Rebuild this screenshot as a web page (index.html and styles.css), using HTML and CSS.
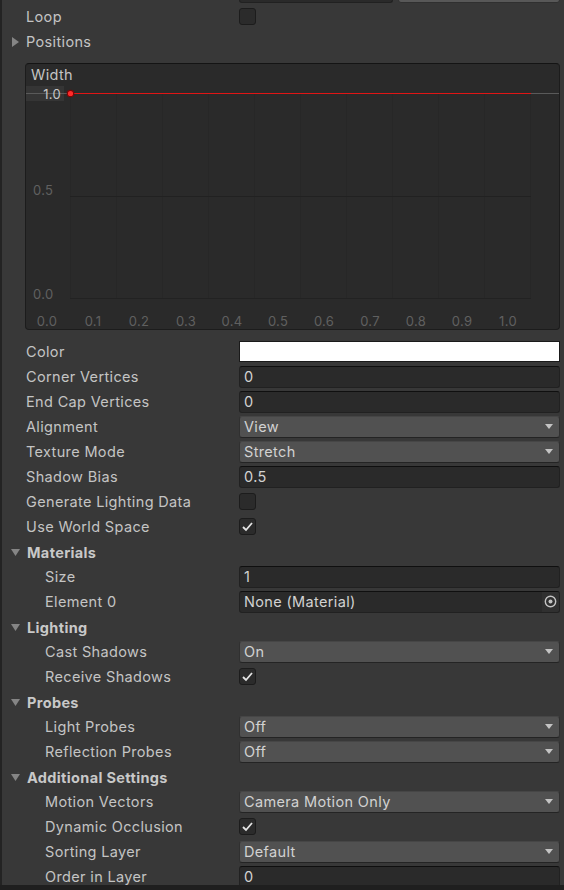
FILE: index.html
```html
<!DOCTYPE html>
<html lang="en">

<head>
    <meta charset="UTF-8">
    <meta name="viewport" content="width=device-width, initial-scale=1.0">
    <title>Line Renderer</title>
    <link rel="stylesheet" href="styles.css">
</head>

<body>
    <div class="inspector">
        <div class="row">
            <span class="label"></span>
            <span class="field text short"></span>
            <span class="field button"></span>
        </div>
        <div class="row">
            <span class="label">Loop</span>
            <span class="checkbox"></span>
        </div>
        <div class="row">
            <span class="foldout">
                <svg width="9" height="12" viewBox="0 0 9 12"><polygon points="1,1 8,6 1,11" /></svg>
            </span>
            <span class="foldout-label plain">Positions</span>
        </div>

        <div class="curve">
            <div class="curve-title">Width</div>
            <svg class="curve-plot" width="535" height="244" viewBox="0 0 535 244">
                <rect x="0" y="0" width="38" height="15" fill="#353535" />
                <g stroke="#272727" stroke-width="1">
                    <line x1="44.5" y1="7" x2="44.5" y2="212" />
                    <line x1="90.5" y1="7" x2="90.5" y2="212" />
                    <line x1="136.5" y1="7" x2="136.5" y2="212" />
                    <line x1="182.5" y1="7" x2="182.5" y2="212" />
                    <line x1="228.5" y1="7" x2="228.5" y2="212" />
                    <line x1="274.5" y1="7" x2="274.5" y2="212" />
                    <line x1="320.5" y1="7" x2="320.5" y2="212" />
                    <line x1="366.5" y1="7" x2="366.5" y2="212" />
                    <line x1="412.5" y1="7" x2="412.5" y2="212" />
                    <line x1="458.5" y1="7" x2="458.5" y2="212" />
                    <line x1="504.5" y1="7" x2="504.5" y2="212" />
                    <line x1="44" y1="110.5" x2="505" y2="110.5" stroke="#212121" />
                    <line x1="44" y1="212.5" x2="505" y2="212.5" stroke="#222222" />
                </g>
                <line x1="0" y1="7.5" x2="535" y2="7.5" stroke="#5a5a5a" />
                <line x1="44" y1="7.5" x2="505" y2="7.5" stroke="#e01515" stroke-width="1.2" />
                <g class="axis" font-size="13">
                    <text x="35" y="8" text-anchor="end" class="axis-hot">1.0</text>
                    <text x="7" y="104">0.5</text>
                    <text x="7" y="208">0.0</text>
                    <text x="21" y="235" text-anchor="middle">0.0</text>
                    <text x="67" y="235" text-anchor="middle">0.1</text>
                    <text x="113" y="235" text-anchor="middle">0.2</text>
                    <text x="160" y="235" text-anchor="middle">0.3</text>
                    <text x="206" y="235" text-anchor="middle">0.4</text>
                    <text x="252" y="235" text-anchor="middle">0.5</text>
                    <text x="298" y="235" text-anchor="middle">0.6</text>
                    <text x="344" y="235" text-anchor="middle">0.7</text>
                    <text x="390" y="235" text-anchor="middle">0.8</text>
                    <text x="436" y="235" text-anchor="middle">0.9</text>
                    <text x="482" y="235" text-anchor="middle">1.0</text>
                </g>
                <circle cx="44.5" cy="7.5" r="3.2" fill="#ff2a2a" stroke="#7a0505" stroke-width="1.2" />
            </svg>
        </div>

        <div class="row">
            <span class="label">Color</span>
            <span class="field color"></span>
        </div>
        <div class="row">
            <span class="label">Corner Vertices</span>
            <span class="field text">0</span>
        </div>
        <div class="row">
            <span class="label">End Cap Vertices</span>
            <span class="field text">0</span>
        </div>
        <div class="row">
            <span class="label">Alignment</span>
            <span class="field popup">View<i class="arrow"></i></span>
        </div>
        <div class="row">
            <span class="label">Texture Mode</span>
            <span class="field popup">Stretch<i class="arrow"></i></span>
        </div>
        <div class="row">
            <span class="label">Shadow Bias</span>
            <span class="field text">0.5</span>
        </div>
        <div class="row">
            <span class="label">Generate Lighting Data</span>
            <span class="checkbox"></span>
        </div>
        <div class="row">
            <span class="label">Use World Space</span>
            <span class="checkbox">
                <svg width="15" height="15" viewBox="0 0 15 15"><polyline points="3,8 6,11 12,4" /></svg>
            </span>
        </div>

        <div class="row header">
            <span class="foldout">
                <svg width="9" height="9" viewBox="0 0 9 9"><polygon points="0,1 9,1 4.5,8" /></svg>
            </span>
            <span class="foldout-label">Materials</span>
        </div>
        <div class="row">
            <span class="label sub">Size</span>
            <span class="field text">1</span>
        </div>
        <div class="row">
            <span class="label sub">Element 0</span>
            <span class="field text object">
                <span class="object-name">None (Material)</span>
                <span class="picker">
                    <svg width="13" height="13" viewBox="0 0 13 13">
                        <circle cx="6.5" cy="6.5" r="5.2" fill="none" stroke="#c4c4c4" stroke-width="1.4" />
                        <circle cx="6.5" cy="6.5" r="2" fill="#c4c4c4" />
                    </svg>
                </span>
            </span>
        </div>

        <div class="row header">
            <span class="foldout">
                <svg width="9" height="9" viewBox="0 0 9 9"><polygon points="0,1 9,1 4.5,8" /></svg>
            </span>
            <span class="foldout-label">Lighting</span>
        </div>
        <div class="row">
            <span class="label sub">Cast Shadows</span>
            <span class="field popup">On<i class="arrow"></i></span>
        </div>
        <div class="row">
            <span class="label sub">Receive Shadows</span>
            <span class="checkbox">
                <svg width="15" height="15" viewBox="0 0 15 15"><polyline points="3,8 6,11 12,4" /></svg>
            </span>
        </div>

        <div class="row header">
            <span class="foldout">
                <svg width="9" height="9" viewBox="0 0 9 9"><polygon points="0,1 9,1 4.5,8" /></svg>
            </span>
            <span class="foldout-label">Probes</span>
        </div>
        <div class="row">
            <span class="label sub">Light Probes</span>
            <span class="field popup">Off<i class="arrow"></i></span>
        </div>
        <div class="row">
            <span class="label sub">Reflection Probes</span>
            <span class="field popup">Off<i class="arrow"></i></span>
        </div>

        <div class="row header">
            <span class="foldout">
                <svg width="9" height="9" viewBox="0 0 9 9"><polygon points="0,1 9,1 4.5,8" /></svg>
            </span>
            <span class="foldout-label">Additional Settings</span>
        </div>
        <div class="row">
            <span class="label sub">Motion Vectors</span>
            <span class="field popup">Camera Motion Only<i class="arrow"></i></span>
        </div>
        <div class="row">
            <span class="label sub">Dynamic Occlusion</span>
            <span class="checkbox">
                <svg width="15" height="15" viewBox="0 0 15 15"><polyline points="3,8 6,11 12,4" /></svg>
            </span>
        </div>
        <div class="row">
            <span class="label sub">Sorting Layer</span>
            <span class="field popup">Default<i class="arrow"></i></span>
        </div>
        <div class="row">
            <span class="label sub">Order in Layer</span>
            <span class="field text">0</span>
        </div>
    </div>
</body>

</html>
```

FILE: styles.css
```css
html,
body {
    margin: 0;
    background-color: #1f1f1f;
}

body {
    font-family: Inter, "Noto Sans", sans-serif;
    font-size: 14.5px;
    letter-spacing: 0.35px;
    color: #c4c4c4;
}

.inspector {
    width: 562px;
    height: 885px;
    overflow: hidden;
    border-left: 2px solid #232323;
    background-color: #383838;
}

.inspector > .row:first-child {
    margin-top: -21px;
}

.row {
    display: flex;
    align-items: center;
    height: 25px;
}

.row.header {
    padding-top: 1px;
    height: 24px;
}

.label {
    box-sizing: border-box;
    flex: 0 0 237px;
    padding-left: 24px;
    white-space: nowrap;
}

.label.sub {
    padding-left: 43px;
}

.foldout {
    display: flex;
    align-items: center;
    padding-left: 9px;
    width: 9px;
    margin-right: 7px;
}

.foldout svg {
    fill: #858585;
}

.foldout-label {
    font-weight: 700;
    color: #c8c8c8;
}

.foldout-label.plain {
    font-weight: 400;
    color: #c4c4c4;
    margin-left: -1px;
}

.field {
    box-sizing: border-box;
    flex: 1;
    height: 22px;
    margin-right: 4px;
    border-radius: 3px;
    display: flex;
    align-items: center;
    padding: 0 4px;
    color: #d2d2d2;
    white-space: nowrap;
}

.field.text {
    background-color: #2a2a2a;
    border: 1px solid #212121;
    border-top-color: #0f0f0f;
}

.field.short {
    flex: 0 0 154px;
    margin-right: 5px;
}

.field.button {
    background-color: #585858;
    border: 1px solid #303030;
}

.field.color {
    height: 21px;
    background-color: #ffffff;
    border: 1px solid #1a1a1a;
    border-radius: 0;
}

.field.popup {
    background-color: #515151;
    border: 1px solid #303030;
    border-top-color: #464646;
    border-bottom-color: #242424;
}

.arrow {
    margin-left: auto;
    margin-right: 2px;
    width: 0;
    height: 0;
    border-left: 4.5px solid transparent;
    border-right: 4.5px solid transparent;
    border-top: 5px solid #c4c4c4;
}

.field.object {
    padding-right: 0;
}

.object-name {
    flex: 1;
}

.picker {
    display: flex;
    align-items: center;
    justify-content: center;
    width: 17px;
    height: 100%;
    background-color: #303030;
    border-radius: 0 2px 2px 0;
}

.checkbox {
    box-sizing: border-box;
    width: 17px;
    height: 17px;
    background-color: #2b2b2b;
    border: 1px solid #1c1c1c;
    border-radius: 3px;
    display: flex;
    align-items: center;
    justify-content: center;
}

.checkbox svg {
    fill: none;
    stroke: #e4e4e4;
    stroke-width: 1.8;
}

.curve {
    margin: 9px 4px 9px 23px;
    height: 267px;
    box-sizing: border-box;
    background-color: #2a2a2a;
    border: 1px solid #1c1c1c;
    border-top-color: #141414;
    border-radius: 4px;
    overflow: hidden;
}

.curve-title {
    height: 22px;
    line-height: 22px;
    padding-left: 5px;
    color: #c4c4c4;
}

.curve-plot {
    display: block;
}

.axis text {
    font-family: Inter, "Noto Sans", sans-serif;
    fill: #606060;
    dominant-baseline: central;
    letter-spacing: 0.3px;
}

.axis .axis-hot {
    fill: #c8c8c8;
}
```
